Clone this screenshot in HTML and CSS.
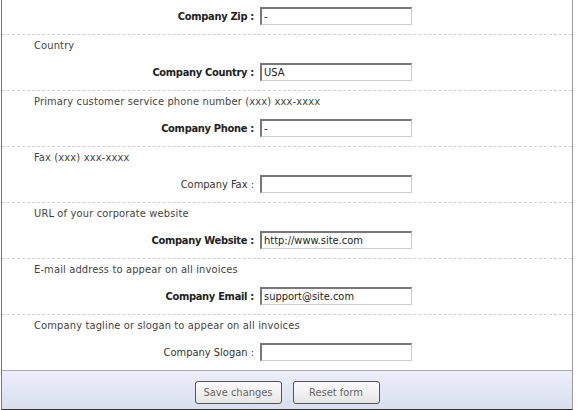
FILE: index.html
```html
<!DOCTYPE html>
<html lang="en">
<head>
    <meta charset="UTF-8">
    <title>Company Settings</title>
    <link rel="stylesheet" href="styles.css">
</head>
<body>
    <form class="settings">
        <div class="row first">
            <div class="field">
                <label class="label strong">Company Zip :</label>
                <input class="box" type="text" value="-">
            </div>
        </div>
        <div class="row">
            <div class="desc">Country</div>
            <div class="field">
                <label class="label strong">Company Country :</label>
                <input class="box" type="text" value="USA">
            </div>
        </div>
        <div class="row">
            <div class="desc">Primary customer service phone number (xxx) xxx-xxxx</div>
            <div class="field">
                <label class="label strong">Company Phone :</label>
                <input class="box" type="text" value="-">
            </div>
        </div>
        <div class="row">
            <div class="desc">Fax (xxx) xxx-xxxx</div>
            <div class="field">
                <label class="label">Company Fax :</label>
                <input class="box" type="text" value="">
            </div>
        </div>
        <div class="row">
            <div class="desc">URL of your corporate website</div>
            <div class="field">
                <label class="label strong">Company Website :</label>
                <input class="box" type="text" value="http://www.site.com">
            </div>
        </div>
        <div class="row">
            <div class="desc">E-mail address to appear on all invoices</div>
            <div class="field">
                <label class="label strong">Company Email :</label>
                <input class="box" type="text" value="support@site.com">
            </div>
        </div>
        <div class="row last">
            <div class="desc">Company tagline or slogan to appear on all invoices</div>
            <div class="field">
                <label class="label">Company Slogan :</label>
                <input class="box" type="text" value="">
            </div>
        </div>
        <div class="actions">
            <button class="btn" type="button">Save changes</button>
            <button class="btn" type="reset">Reset form</button>
        </div>
    </form>
</body>
</html>
```

FILE: styles.css
```css
body {
    margin: 0;
    background-color: #fff;
    font-family: 'DejaVu Sans Condensed', 'DejaVu Sans', sans-serif;
    font-size: 11px;
    color: #333;
}
.settings {
    width: 570px;
    margin-left: 1px;
    border-left: 1px solid #777;
    border-right: 1px solid #999;
    border-bottom: 2px solid #333;
}
.row {
    padding: 4px 0 9px;
    border-bottom: 1px dashed #cfcfcf;
}
.row.first {
    padding-top: 7px;
}
.row.last {
    border-bottom: 1px solid #aab;
}
.desc {
    padding-left: 32px;
    height: 14px;
    line-height: 14px;
    color: #444;
    letter-spacing: 0.15px;
}
.field {
    display: flex;
    align-items: center;
    gap: 6px;
    margin-top: 10px;
}
.row.first .field {
    margin-top: 0;
}
.label {
    width: 252px;
    text-align: right;
    color: #333;
}
.label.strong {
    font-weight: bold;
    color: #222;
    letter-spacing: -0.3px;
}
.box {
    box-sizing: border-box;
    width: 152px;
    height: 18px;
    margin: 0;
    padding: 0 2px;
    font-family: 'DejaVu Sans Condensed', 'DejaVu Sans', sans-serif;
    font-size: 11px;
    color: #222;
    background-color: #fff;
    border: 1px solid #ccc;
    border-top: 2px solid #777;
    border-left: 2px solid #777;
}
.actions {
    display: flex;
    justify-content: center;
    gap: 11px;
    padding: 10px 0 5px;
    background: linear-gradient(#eceef9, #d9dff0);
}
.btn {
    width: 87px;
    height: 23px;
    padding: 0;
    font-family: 'DejaVu Sans Condensed', 'DejaVu Sans', sans-serif;
    font-size: 11px;
    color: #666;
    background: linear-gradient(#fbfbfb, #e6e6e6);
    border: 1px solid #555;
    border-radius: 3px;
}
```
